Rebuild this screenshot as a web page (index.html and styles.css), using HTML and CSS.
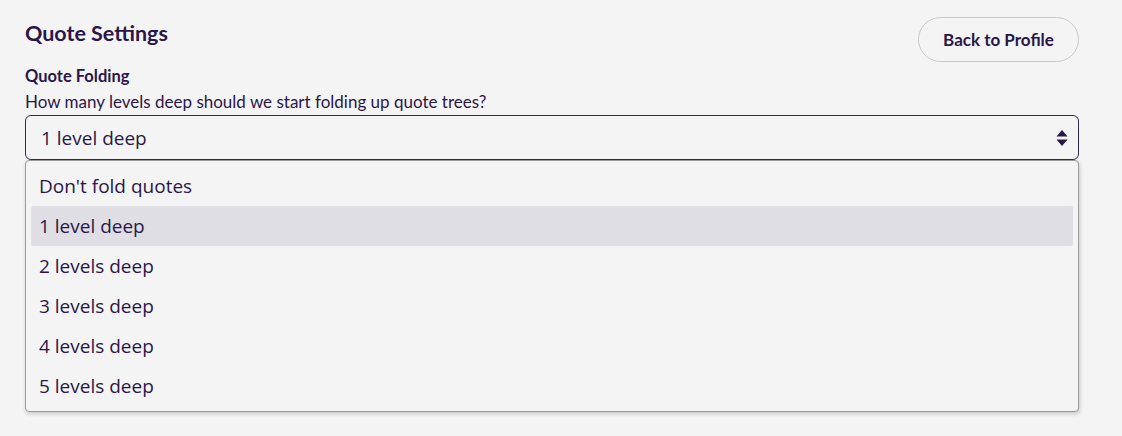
FILE: index.html
```html
<!DOCTYPE html>
<html>
<head>
<meta charset="utf-8">
<link rel="stylesheet" href="styles.css">
</head>
<body>
<main class="page">
  <div class="header">
    <h1 class="title">Quote Settings</h1>
    <button class="back-btn">Back to Profile</button>
  </div>
  <section class="field">
    <div class="label">Quote Folding</div>
    <div class="desc">How many levels deep should we start folding up quote trees?</div>
    <div class="select-wrap">
      <div class="select">
        <span class="select-value">1 level deep</span>
        <svg class="arrows" width="12" height="18" viewBox="0 0 12 18"><path d="M6 1 L11.5 7.5 H0.5 Z M0.5 10.5 H11.5 L6 17 Z" fill="#2a1748"/></svg>
      </div>
      <ul class="options">
        <li class="option">Don't fold quotes</li>
        <li class="option selected">1 level deep</li>
        <li class="option">2 levels deep</li>
        <li class="option">3 levels deep</li>
        <li class="option">4 levels deep</li>
        <li class="option">5 levels deep</li>
      </ul>
    </div>
  </section>
</main>
</body>
</html>
```
FILE: styles.css
```css
html, body {
  margin: 0;
  padding: 0;
  background: #f4f4f4;
}
body {
  font-family: "Lato", "Noto Sans", sans-serif;
  color: #2a1748;
  height: 436px;
  overflow: hidden;
}
.page {
  padding: 17px 43px 0 25px;
}
.header {
  display: flex;
  justify-content: space-between;
  align-items: flex-start;
}
.title {
  margin: 2px 0 0 0;
  font-size: 21.5px;
  font-weight: 700;
  line-height: 28px;
}
.back-btn {
  height: 45px;
  width: 161px;
  border: 1px solid #c9c7d1;
  border-radius: 23px;
  background: transparent;
  font-family: "Lato", "Noto Sans", sans-serif;
  font-weight: 700;
  font-size: 17px;
  color: #2a1748;
  padding: 0;
}
.field {
  margin-top: 4px;
}
.label {
  font-weight: 700;
  font-size: 16.5px;
  line-height: 20px;
}
.desc {
  font-size: 17px;
  line-height: 21px;
  margin-top: 5px;
}
.select-wrap {
  position: relative;
  margin-top: 3px;
}
.select {
  border: 1px solid #2c2a55;
  border-radius: 6px;
  display: flex;
  align-items: center;
  justify-content: space-between;
  padding: 0 10px 0 15px;
  box-sizing: border-box;
  height: 45px;
}
.select-value {
  font-family: "Open Sans", "Noto Sans", sans-serif;
  font-size: 19px;
}
.arrows {
  display: block;
}
.options {
  list-style: none;
  margin: 0;
  padding: 5px 5px 5px 5px;
  position: absolute;
  top: 45px;
  left: 0;
  right: 0;
  background: #f4f4f4;
  border: 1px solid #9a9a9a;
  border-radius: 4px;
  box-shadow: 1px 2px 4px rgba(0,0,0,0.18);
  font-family: "Open Sans", "Noto Sans", sans-serif;
  font-size: 19px;
}
.option {
  height: 40px;
  line-height: 40px;
  padding-left: 8px;
  border-radius: 2px;
}
.option.selected {
  background: #dfdee4;
}
```
